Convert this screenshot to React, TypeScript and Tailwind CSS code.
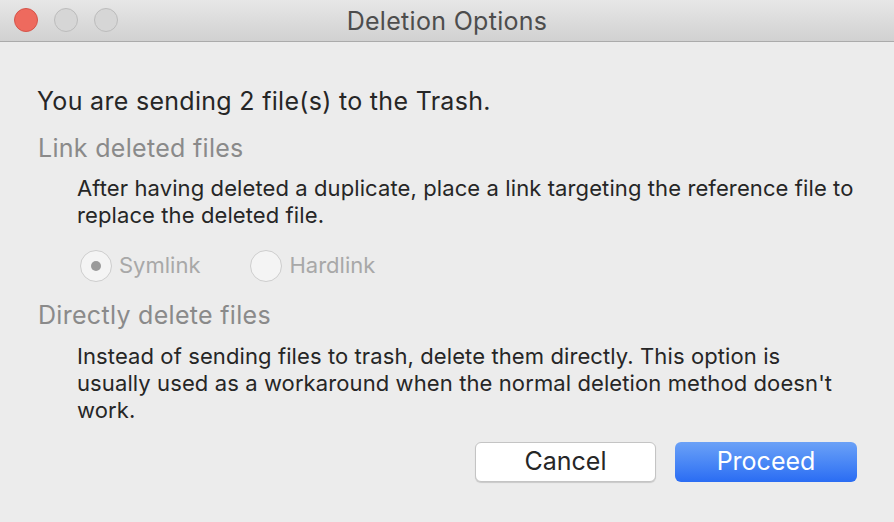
export default function App() {
  return (
    <div
      className="w-[894px] h-[522px] overflow-hidden bg-[#ececec] flex flex-col text-[#262626]"
      style={{ fontFamily: "Inter, 'Noto Sans', sans-serif" }}
    >
      {/* title bar */}
      <div className="relative h-[42px] shrink-0 bg-gradient-to-b from-[#e7e7e7] to-[#d1d1d1] border-b border-[#ababab] flex items-center justify-center">
        <div className="absolute left-[14px] top-[8px] flex gap-[16px]">
          <span className="w-[24px] h-[24px] rounded-full bg-[#ee6a5e] border border-[#d5544a]" />
          <span className="w-[24px] h-[24px] rounded-full bg-[#d6d6d6] border border-[#bcbcbc]" />
          <span className="w-[24px] h-[24px] rounded-full bg-[#d6d6d6] border border-[#bcbcbc]" />
        </div>
        <span className="text-[25px] leading-[30px] text-[#4d4d4d] tracking-[0.3px]">Deletion Options</span>
      </div>

      <div className="flex-1 flex flex-col pl-[37px] pr-[37px] pt-[44px]">
        <p className="text-[25px] leading-[30px] tracking-[0.3px]">You are sending 2 file(s) to the Trash.</p>

        <h2 className="text-[25px] leading-[30px] tracking-[0.3px] text-[#8a8a8a] mt-[17px] pl-[1px]">Link deleted files</h2>
        <p className="text-[22px] leading-[27px] tracking-[0.1px] pl-[40px] mt-[12px]">
          After having deleted a duplicate, place a link targeting the reference file to replace the deleted file.
        </p>

        <div className="flex items-center gap-[50px] pl-[43px] mt-[20px] text-[22px] text-[#a8a8a8]">
          <label className="flex items-center gap-[7px]">
            <span className="w-[32px] h-[32px] rounded-full border border-[#cdcdcd] bg-[#f4f4f4] flex items-center justify-center">
              <span className="w-[10px] h-[10px] rounded-full bg-[#9a9a9a]" />
            </span>
            Symlink
          </label>
          <label className="flex items-center gap-[7px]">
            <span className="w-[32px] h-[32px] rounded-full border border-[#cdcdcd] bg-[#f4f4f4]" />
            Hardlink
          </label>
        </div>

        <h2 className="text-[25px] leading-[30px] tracking-[0.3px] text-[#8a8a8a] mt-[18px] pl-[1px]">Directly delete files</h2>
        <p className="text-[22px] leading-[27px] tracking-[0.1px] pl-[40px] mt-[13px]">
          Instead of sending files to trash, delete them directly. This option is usually used as a workaround when the normal deletion method doesn't work.
        </p>

        <div className="flex justify-end gap-[19px] mt-[18px] pr-[0px]">
          <button className="w-[181px] h-[40px] rounded-[6px] bg-white border border-[#c4c4c4] shadow-[0_1px_1px_rgba(0,0,0,0.15)] text-[25px] text-[#262626]">
            Cancel
          </button>
          <button className="w-[182px] h-[40px] rounded-[6px] bg-gradient-to-b from-[#6ba1f7] to-[#2a6cf3] text-[25px] text-white">
            Proceed
          </button>
        </div>
      </div>
    </div>
  );
}
